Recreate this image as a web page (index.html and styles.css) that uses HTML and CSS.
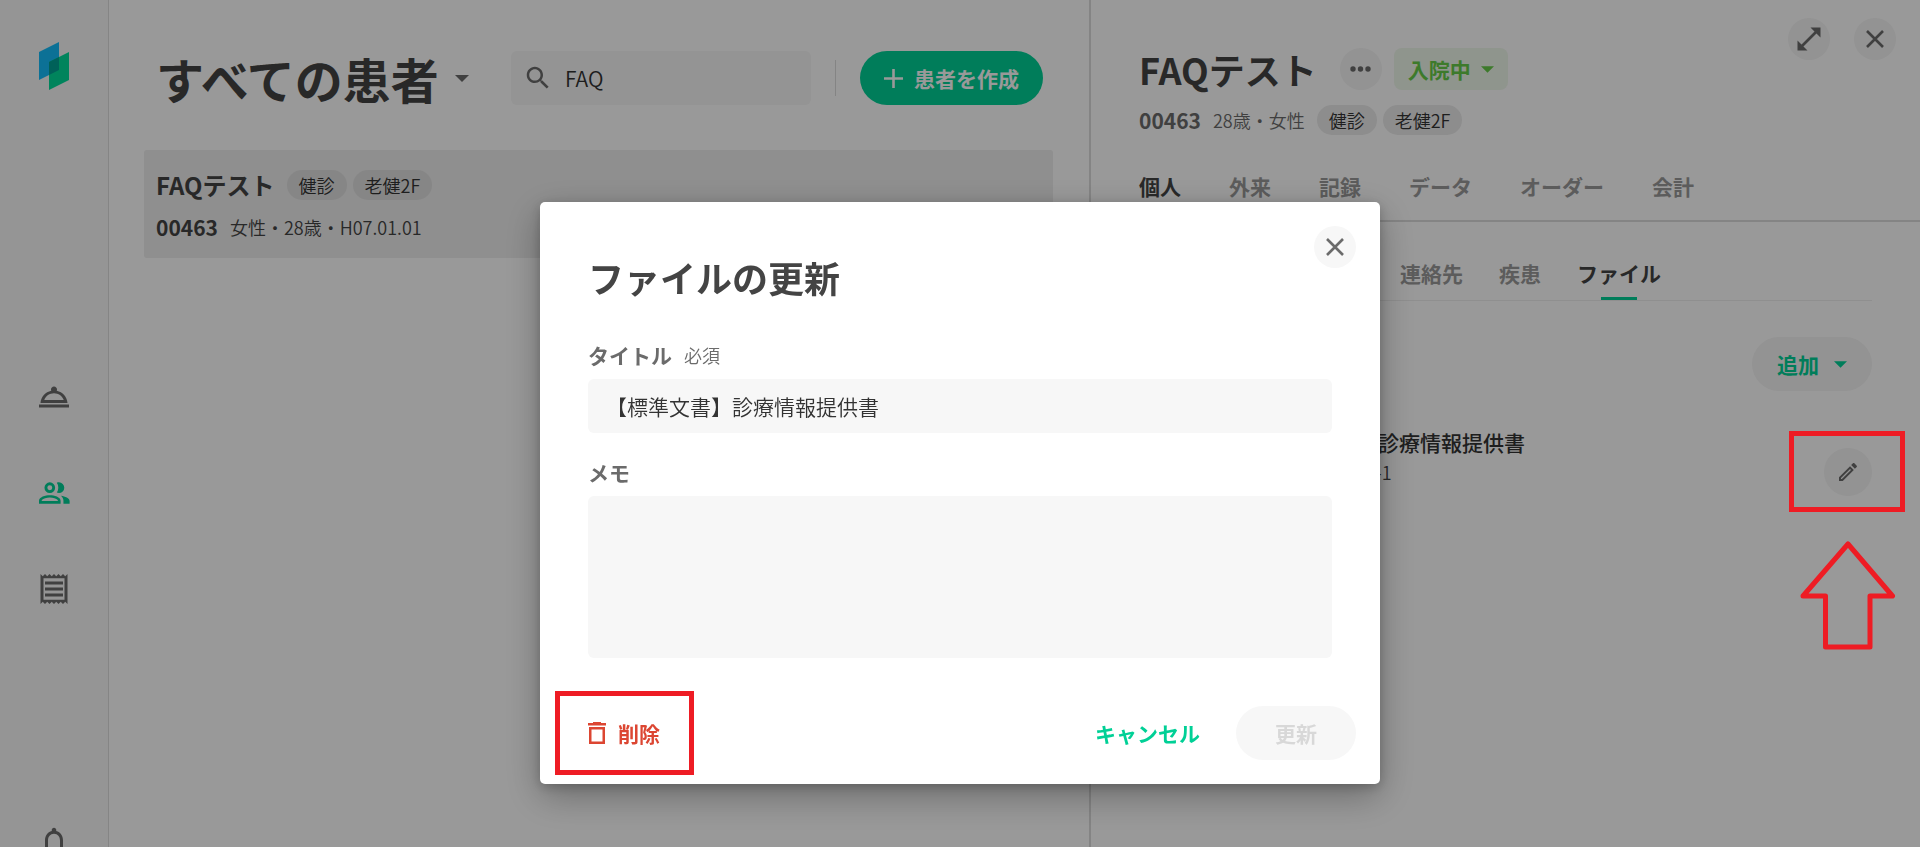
FILE: index.html
```html
<!DOCTYPE html>
<html lang="ja">
<head>
<meta charset="utf-8">
<title>ファイルの更新</title>
<link rel="stylesheet" href="styles.css">
</head>
<body>
<div class="app">
  <nav class="sidebar" aria-label="メイン">
    <a class="logo" href="#" aria-label="ホーム">
      <svg width="30" height="48" viewBox="0 0 30 48">
        <path d="M0 10 20 0v28L0 38z" fill="#14bdfa"/>
        <path d="M10 20 30 10v28L10 48z" fill="#00dc9a"/>
        <path d="M10 20 20 15v13L10 33z" fill="#00a294"/>
      </svg>
    </a>
    <div class="nav-links">
      <a class="nav-link" href="#" aria-label="受付">
        <svg class="icon-lg" viewBox="0 0 24 24"><path d="M2 17h20v2H2zm11.84-9.21c.1-.24.16-.51.16-.79 0-1.1-.9-2-2-2s-2 .9-2 2c0 .28.06.55.16.79C6.25 8.6 3.27 11.93 3 16h18c-.27-4.07-3.25-7.4-7.16-8.21zM12 9.58c2.95 0 5.47 1.83 6.5 4.41h-13c1.03-2.58 3.55-4.41 6.5-4.41z"/></svg>
      </a>
      <a class="nav-link nav-link-active" href="#" aria-label="患者">
        <svg class="icon-lg" viewBox="0 0 24 24"><path fill-rule="evenodd" d="M9.200 4.900a3.550 3.550 0 1 1 0 7.100 3.550 3.550 0 0 1 0-7.100zm0 1.900a1.650 1.650 0 1 0 0 3.300 1.650 1.650 0 0 0 0-3.300zM13.900 5.200c.5-.2.900-.3 1.400-.3a3.550 3.550 0 0 1 0 7.100c-.5 0-.900-.1-1.400-.3 1.300-2 1.300-4.500 0-6.500zM9.200 13.500c-3 0-7.200 1.200-7.200 3.700V19.100h14.400v-1.900c0-2.500-4.200-3.700-7.200-3.700zm0 1.500c2.200 0 4.300.7 5.300 1.700l.1.700H3.800l.1-.7c1-1 3.100-1.700 5.300-1.700zM16.600 13.800c2.800.4 5.800 1.500 5.800 3.500v1.800h-4.100v-1.900c0-1.400-.7-2.500-1.700-3.400z"/></svg>
      </a>
      <a class="nav-link" href="#" aria-label="会計">
        <svg class="icon-lg" viewBox="0 0 24 24"><path d="M19.5 3.5 18 2l-1.5 1.5L15 2l-1.5 1.5L12 2l-1.5 1.5L9 2 7.5 3.5 6 2 4.5 3.5 3 2v20l1.5-1.5L6 22l1.5-1.5L9 22l1.5-1.5L12 22l1.5-1.5L15 22l1.5-1.5L18 22l1.5-1.5L21 22V2l-1.5 1.5zM19 19.09H5V4.91h14v14.18zM6 15h12v2H6zm0-4h12v2H6zm0-4h12v2H6z"/></svg>
      </a>
    </div>
    <a class="nav-link nav-bell" href="#" aria-label="通知">
      <svg class="icon-lg" viewBox="0 0 24 24"><path d="M12 22c1.1 0 2-.9 2-2h-4c0 1.1.9 2 2 2zm6-6v-5c0-3.07-1.63-5.64-4.5-6.32V4c0-.83-.67-1.5-1.5-1.5s-1.5.67-1.5 1.5v.68C7.64 5.36 6 7.92 6 11v5l-2 2v1h16v-1l-2-2zm-2 1H8v-6c0-2.48 1.51-4.5 4-4.5s4 2.02 4 4.5v6z"/></svg>
    </a>
  </nav>

  <main class="list">
    <header class="list-head">
      <h1 class="list-title">すべての患者
        <svg class="caret" viewBox="0 0 14 7"><path d="M0 0h14L7 7z"/></svg>
      </h1>
      <label class="search">
        <svg class="icon-search" viewBox="0 0 24 24"><path d="M15.5 14h-.79l-.28-.27C15.41 12.59 16 11.11 16 9.5 16 5.91 13.09 3 9.5 3S3 5.91 3 9.5 5.91 16 9.5 16c1.61 0 3.09-.59 4.23-1.57l.27.28v.79l5 4.99L20.49 19l-4.99-5zm-6 0C7.01 14 5 11.99 5 9.5S7.01 5 9.5 5 14 7.01 14 9.5 11.99 14 9.5 14z"/></svg>
        <input class="search-input" type="text" value="FAQ" aria-label="検索">
      </label>
      <span class="head-rule"></span>
      <button class="pill pill-primary" type="button">
        <svg width="19" height="19" viewBox="0 0 19 19"><path d="M9.5 0v19M0 9.500h19" stroke="currentColor" stroke-width="2.6"/></svg>
        患者を作成
      </button>
    </header>
    <a class="patient" href="#">
      <span class="patient-row">
        <strong class="patient-name">FAQテスト</strong>
        <span class="chips"><span class="chip">健診</span><span class="chip">老健2F</span></span>
      </span>
      <span class="patient-row">
        <strong class="patient-id">00463</strong>
        <span class="patient-meta">女性・28歳・H07.01.01</span>
      </span>
    </a>
  </main>

  <section class="detail">
    <header class="detail-head">
      <div class="detail-id">
        <div class="detail-name-row">
          <h2 class="detail-name">FAQテスト</h2>
          <div class="detail-tools">
            <button class="round" type="button" aria-label="メニュー">
              <svg width="21" height="6" viewBox="0 0 21 6"><circle cx="3" cy="3" r="2.7"/><circle cx="10.5" cy="3" r="2.7"/><circle cx="18" cy="3" r="2.7"/></svg>
            </button>
            <button class="status" type="button">入院中
              <svg class="caret-sm" viewBox="0 0 14 7"><path d="M0 0h14L7 7z"/></svg>
            </button>
          </div>
        </div>
        <div class="detail-meta-row">
          <strong class="detail-no">00463</strong>
          <span class="detail-meta">28歳・女性</span>
          <span class="chips"><span class="chip">健診</span><span class="chip">老健2F</span></span>
        </div>
      </div>
      <div class="window-tools">
        <button class="round" type="button" aria-label="拡大">
          <svg width="24" height="24" viewBox="0 0 24 24"><path d="M13.500.5h10v10zM.5 13.500v10h10z"/><path d="M3 21 21 3" stroke="currentColor" stroke-width="2.6"/></svg>
        </button>
        <button class="round" type="button" aria-label="パネルを閉じる">
          <svg width="18" height="18" viewBox="0 0 18 18"><path d="m1 1 16 16M17 1 1 17" stroke="currentColor" stroke-width="2.6"/></svg>
        </button>
      </div>
    </header>
    <nav class="tabs" aria-label="患者情報">
      <a class="tab tab-active" href="#">個人</a>
      <a class="tab" href="#">外来</a>
      <a class="tab" href="#">記録</a>
      <a class="tab" href="#">データ</a>
      <a class="tab" href="#">オーダー</a>
      <a class="tab" href="#">会計</a>
    </nav>
    <div class="detail-body">
      <nav class="subtabs" aria-label="個人">
        <a class="subtab" href="#">連絡先</a>
        <a class="subtab" href="#">疾患</a>
        <a class="subtab subtab-active" href="#">ファイル</a>
      </nav>
      <button class="pill pill-add" type="button">追加
        <svg class="caret-sm" viewBox="0 0 14 7"><path d="M0 0h14L7 7z"/></svg>
      </button>
      <article class="file">
        <div class="file-text">
          <h3 class="file-title">【標準文書】診療情報提供書</h3>
          <p class="file-date"><span>作成日</span><time>2023-1-1</time></p>
        </div>
        <button class="round round-lg" type="button" aria-label="編集">
          <svg width="24" height="24" viewBox="0 0 24 24"><path d="m14.06 9.02.92.92L5.92 19H5v-.92l9.06-9.06M17.66 3c-.25 0-.51.1-.7.29l-1.83 1.83 3.75 3.75 1.83-1.83c.39-.39.39-1.02 0-1.41l-2.34-2.34c-.2-.2-.45-.29-.71-.29zm-3.6 3.19L3 17.25V21h3.75L17.81 9.94l-3.75-3.75z"/></svg>
        </button>
      </article>
    </div>
  </section>
</div>

<div class="overlay">
  <form class="dialog" role="dialog" aria-labelledby="dialog-title">
    <header class="dialog-head">
      <h2 class="dialog-title" id="dialog-title">ファイルの更新</h2>
      <button class="round round-light" type="button" aria-label="閉じる">
        <svg width="18" height="18" viewBox="0 0 18 18"><path d="m1 1 16 16M17 1 1 17" stroke="currentColor" stroke-width="2.6"/></svg>
      </button>
    </header>
    <div class="fields">
      <div class="field">
        <div class="label-row"><label class="label" for="title">タイトル</label><span class="required">必須</span></div>
        <input class="control" id="title" type="text" value="【標準文書】診療情報提供書">
      </div>
      <div class="field">
        <div class="label-row"><label class="label" for="memo">メモ</label></div>
        <textarea class="control control-memo" id="memo"></textarea>
      </div>
    </div>
    <footer class="dialog-foot">
      <button class="text-button danger" type="button">
        <svg width="18" height="22" viewBox="0 0 18 22"><path d="M5 0h8v1h5v2.500H0V1h5zM1 5h16v17H1zm2.500 2.500v12h11v-12z" fill-rule="evenodd"/></svg>
        削除
      </button>
      <button class="text-button cancel" type="button">キャンセル</button>
      <button class="pill pill-disabled" type="submit" disabled>更新</button>
    </footer>
    <span class="mark mark-delete"></span>
  </form>
</div>
<div class="mark mark-edit"></div>
<svg class="mark-arrow" width="96" height="112" viewBox="0 0 96 112"><path d="M48 5 92.500 57H70v51H25.500V57H3z"/></svg>
</body>
</html>
```

FILE: styles.css
```css
* { box-sizing: border-box; }

body {
  margin: 0;
  height: 100vh;
  overflow: hidden;
  background: #fff;
  color: #444;
  font-family: "Noto Sans CJK JP", sans-serif;
  font-size: 21px;
  font-weight: 350;
  line-height: 30px;
}

h1, h2, h3, p { margin: 0; }
a { color: inherit; text-decoration: none; }
button, input, textarea { font: inherit; color: inherit; border: 0; margin: 0; padding: 0; }
button { background: none; font-weight: 700; }
svg { display: block; flex: none; fill: currentColor; }

.app { display: flex; height: 100%; }

.sidebar {
  flex: none;
  width: 109px;
  height: 100%;
  overflow: hidden;
  padding-top: 42px;
  display: flex;
  flex-direction: column;
  align-items: center;
  background: #f8f8f8;
  border-right: 1px solid #dedede;
  color: #6b6b6b;
}
.sidebar > * { flex: none; }
.nav-links { display: flex; flex-direction: column; gap: 60px; margin-top: 289px; }
.nav-link-active { color: #00d096; }
.nav-bell { margin-top: 217px; }
.icon-lg { width: 36px; height: 36px; }

.list { flex: 1; min-width: 0; padding: 51px 36px 0 35px; }
.list-head { display: flex; align-items: center; padding: 0 10px 0 12px; height: 54px; }
.list-title {
  display: flex;
  align-items: center;
  gap: 16px;
  font-size: 48px;
  line-height: 54px;
  font-weight: 700;
  white-space: nowrap;
}
.caret { width: 14px; height: 7px; color: #6b6b6b; }
.caret-sm { width: 13px; height: 7px; }
.search {
  flex: none;
  display: flex;
  align-items: center;
  gap: 12px;
  width: 300px;
  height: 54px;
  margin-left: auto;
  padding: 0 12px;
  border-radius: 6px;
  background: #f7f7f7;
}
.icon-search { width: 30px; height: 30px; color: #6b6b6b; }
.search-input { flex: 1; min-width: 0; background: none; color: #333; }
.head-rule { width: 1px; height: 36px; margin: 0 24px; background: #ddd; }

.pill {
  display: inline-flex;
  align-items: center;
  justify-content: center;
  height: 54px;
  padding: 0 24px;
  border-radius: 27px;
  white-space: nowrap;
}
.pill-primary { gap: 11px; background: #00d096; color: #fff; }

.patient {
  display: flex;
  flex-direction: column;
  gap: 12px;
  margin-top: 45px;
  padding: 20px 12px 16px;
  border-radius: 3px;
  background: #eee;
}
.patient-row { display: flex; align-items: center; gap: 12px; }
.patient-name { font-size: 24px; font-weight: 700; }
.patient-id { font-weight: 700; }
.patient-meta, .detail-meta { font-size: 18px; }
.chips { display: flex; gap: 6px; }
.chip {
  padding: 0 12px;
  border-radius: 15px;
  background: #e0e0e0;
  color: #333;
  font-size: 18px;
}
.detail .chip { background: #ebebeb; }

.detail {
  flex: none;
  width: 831px;
  border-left: 2px solid #dcdcdc;
}
.detail-head { display: flex; justify-content: space-between; padding: 18px 24px 0 48px; }
.detail-name-row { display: flex; gap: 23px; padding-top: 30px; }
.detail-name { font-size: 36px; line-height: 42px; font-weight: 700; }
.detail-tools { display: flex; gap: 12px; }
.round {
  display: flex;
  align-items: center;
  justify-content: center;
  width: 42px;
  height: 42px;
  border-radius: 50%;
  background: #f5f5f5;
  color: #6b6b6b;
}
.round-lg { width: 48px; height: 48px; }
.status {
  display: flex;
  align-items: center;
  gap: 10px;
  height: 42px;
  padding: 0 14px;
  border-radius: 8px;
  background: #eff8eb;
  color: #66cc49;
}
.detail-meta-row { display: flex; align-items: center; gap: 12px; margin-top: 15px; color: #6b6b6b; }
.detail-no { font-weight: 700; }
.window-tools { display: flex; gap: 24px; }

.tabs {
  display: flex;
  gap: 48px;
  padding: 36px 48px 19px;
  border-bottom: 2px solid #dcdcdc;
  color: #999;
  font-weight: 700;
}
.tab-active, .subtab-active { color: #444; }
.detail-body { display: flex; flex-direction: column; padding: 0 48px; }
.subtabs {
  display: flex;
  gap: 36px;
  padding-left: 261px;
  border-bottom: 1px solid #eee;
  color: #999;
  font-weight: 700;
}
.subtab {
  display: flex;
  flex-direction: column;
  align-items: center;
  gap: 9px;
  padding-top: 36px;
}
.subtab::after { content: ""; width: 36px; height: 3px; }
.subtab-active::after { background: #00d096; }
.pill-add {
  align-self: flex-end;
  gap: 15px;
  width: 120px;
  margin-top: 36px;
  background: #f5f5f5;
  color: #00d096;
}
.file { display: flex; align-items: flex-start; margin-top: 36px; padding-left: 113px; }
.file .round { margin-top: 21px; }
.file-text { flex: 1; }
.file-title { font-size: 21px; font-weight: 500; color: #333; }
.file-date { display: flex; gap: 14px; font-size: 18px; }

.overlay {
  position: fixed;
  inset: 0;
  display: flex;
  align-items: flex-start;
  justify-content: center;
  padding-top: 202px;
  background: rgba(0, 0, 0, 0.4);
}
.dialog {
  position: relative;
  width: 840px;
  padding: 24px;
  border-radius: 5px;
  background: #fff;
  box-shadow: 0 12px 36px rgba(0, 0, 0, 0.3), 0 3px 12px rgba(0, 0, 0, 0.2);
}
.dialog-head { display: flex; justify-content: space-between; padding-left: 24px; }
.dialog-title { padding-top: 24px; font-size: 36px; line-height: 54px; font-weight: 700; }
.round-light { background: #f7f7f7; }
.fields { display: flex; flex-direction: column; gap: 24px; padding: 36px 24px 0; }
.label-row { display: flex; align-items: center; gap: 12px; margin-bottom: 9px; color: #6b6b6b; }
.label { font-weight: 700; }
.required { font-size: 18px; }
.control {
  display: block;
  width: 100%;
  height: 54px;
  padding: 0 18px;
  border-radius: 6px;
  background: #f7f7f7;
  color: #333;
}
.control-memo { height: 162px; resize: none; }
.dialog-foot { display: flex; align-items: center; gap: 36px; padding-left: 24px; margin-top: 48px; }
.text-button { display: flex; align-items: center; gap: 12px; height: 54px; white-space: nowrap; }
.danger { margin-right: auto; color: #dc4632; }
.cancel { color: #00d096; }
.pill-disabled { width: 120px; background: #f7f7f7; color: #d8d8d8; }

/* Callouts drawn over the screen */
.mark { position: absolute; border: 5px solid #ee1c24; pointer-events: none; }
.mark-delete { left: 15px; bottom: 9px; width: 139px; height: 84px; }
.mark-edit { top: 431px; right: 15px; width: 116px; height: 81px; }
.mark-arrow {
  position: absolute;
  top: 539px;
  right: 24px;
  fill: none;
  stroke: #ee1c24;
  stroke-width: 5;
  stroke-linejoin: round;
}
```
